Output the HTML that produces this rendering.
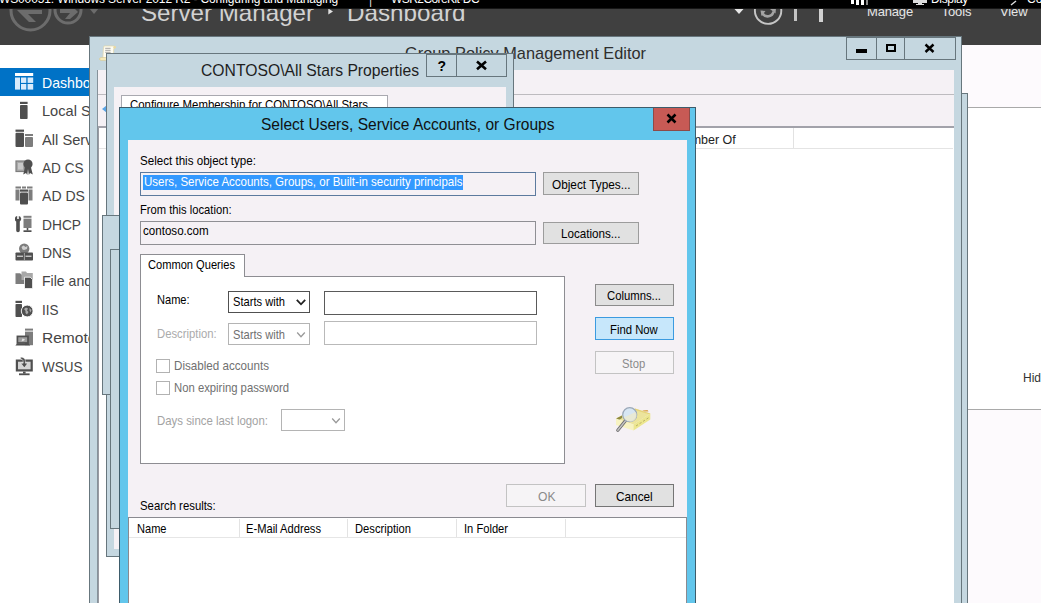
<!DOCTYPE html>
<html lang="en">
<head>
<meta charset="utf-8">
<title>Server Manager - Select Users, Service Accounts, or Groups</title>
<style>
html,body{margin:0;padding:0;}
body{width:1041px;height:603px;overflow:hidden;position:relative;background:#fff;font-family:"Liberation Sans",sans-serif;}
body>div,body>svg,body>span{position:absolute;box-sizing:border-box;}
div>div,div>svg{position:absolute;box-sizing:border-box;}
.t{white-space:nowrap;display:block;}
</style>
</head>
<body>
<div style="left:0px;top:8px;width:1041px;height:37px;background:#404040;"></div>
<svg style="left:0px;top:8px;" width="130" height="36" viewBox="0 0 130 36">
<g fill="none" stroke="#6c6c6c" stroke-width="3">
<circle cx="30.5" cy="2.5" r="19.5"/>
<circle cx="68" cy="2" r="13"/>
</g>
<path d="M18 2 L30 2 L42 2 L42 6 L28 6 L36 14 L29 14 L17 2 Z" fill="#6c6c6c"/>
<path d="M60 0 L74 0 L78 4 L70 11 L65 11 L70 5 L60 5 Z" fill="#6c6c6c"/>
<path d="M89 0 L99 0 L94 6 Z" fill="#6c6c6c"/>
</svg>
<span id="t2" class="t" style="top:-2px;font-size:24px;line-height:29px;color:#d2d2d2;left:140.50px;transform:scaleX(1.0054);transform-origin:0 0;">Server Manager</span>
<svg style="left:328px;top:8px;" width="6" height="7" viewBox="0 0 6 7"><path d="M0.3 0.5 L5 3.5 L0.3 6.5 Z" fill="#e0e0e0"/></svg>
<span id="t4" class="t" style="top:-2px;font-size:24px;line-height:29px;color:#d2d2d2;left:346.50px;transform:scaleX(1.0092);transform-origin:0 0;">Dashboard</span>
<svg style="left:734px;top:9px;" width="10" height="6" viewBox="0 0 10 6"><path d="M0.5 0 L9.5 0 L5 5 Z" fill="#e8e8e8"/></svg>
<svg style="left:750px;top:8px;" width="36" height="24" viewBox="0 0 36 24"><circle cx="18.1" cy="2.7" r="13.2" fill="none" stroke="#c6c6c6" stroke-width="1.9"/>
<path d="M12.5 5.5 A6 6 0 0 0 23.5 3.5" fill="none" stroke="#a4a4a4" stroke-width="2.6"/>
<path d="M10.5 2.5 L15.5 3 L11.5 8 Z M20 1 L26 0 L25.5 5.5 Z" fill="#a4a4a4"/></svg>
<div style="left:794px;top:8px;width:2.5px;height:12.5px;background:#c4c4c4;"></div>
<div style="left:819.3px;top:8px;width:3.4px;height:13.7px;background:#d2d2d2;"></div>
<span id="t9" class="t" style="top:4px;font-size:13px;line-height:16px;color:#e6e6e6;letter-spacing:-0.164px;left:867.00px;">Manage</span>
<span id="t10" class="t" style="top:4px;font-size:13px;line-height:16px;color:#e6e6e6;letter-spacing:-0.072px;left:941.50px;">Tools</span>
<span id="t11" class="t" style="top:4px;font-size:13px;line-height:16px;color:#e6e6e6;letter-spacing:-0.113px;left:1000.00px;">View</span>
<div style="left:0px;top:0px;width:1041px;height:8px;background:#000;"></div>
<span id="t13" class="t" style="top:-8px;font-size:12px;line-height:14px;color:#fff;letter-spacing:-0.136px;left:-1.00px;">WS00051: Windows Server 2012 R2 - Configuring and Managing</span>
<span id="t14" class="t" style="top:-7px;font-size:12px;line-height:14px;color:#ddd;left:369.00px;">|</span>
<span id="t15" class="t" style="top:-8px;font-size:12px;line-height:14px;color:#fff;letter-spacing:-0.573px;left:391.00px;">WSR2CoreKit-DC</span>
<span id="t16" class="t" style="top:-8px;font-size:12px;line-height:14px;color:#fff;letter-spacing:-0.337px;left:931.00px;">Display</span>
<span id="t17" class="t" style="top:-8px;font-size:12px;line-height:14px;color:#fff;left:1027.00px;">Co</span>
<div style="left:851px;top:0px;width:3px;height:4px;background:#fff;"></div>
<div style="left:856px;top:0px;width:3px;height:5px;background:#fff;"></div>
<div style="left:861px;top:0px;width:3px;height:5px;background:#fff;"></div>
<div style="left:866px;top:0px;width:2px;height:5px;background:#888;"></div>
<div style="left:913px;top:0px;width:14px;height:3px;background:#ddd;"></div>
<div style="left:918px;top:3px;width:4px;height:1px;background:#ddd;"></div>
<div style="left:916px;top:4px;width:8px;height:1px;background:#ddd;"></div>
<svg style="left:1010px;top:0px;" width="8" height="6" viewBox="0 0 8 6"><path d="M1 5 L6 1" stroke="#ddd" stroke-width="1.5" fill="none"/></svg>
<div style="left:0px;top:8px;width:1041px;height:1px;background:#161616;"></div>
<div style="left:89px;top:45px;width:952px;height:62px;background:#fdfafd;"></div>
<div style="left:89px;top:107px;width:952px;height:1px;background:#a9a9a9;"></div>
<div style="left:89px;top:409px;width:952px;height:1px;background:#a9a9a9;"></div>
<div style="left:89px;top:410px;width:952px;height:193px;background:#fdfafd;"></div>
<span id="t31" class="t" style="top:371px;font-size:12px;line-height:14px;color:#333;left:1023.00px;">Hide</span>
<div style="left:0px;top:68px;width:89px;height:27.5px;background:#0072c6;"></div>
<span id="t33" class="t" style="top:74px;font-size:14.6px;line-height:18px;color:#fff;left:42.00px;transform:scaleX(0.9663);transform-origin:0 0;">Dashboard</span>
<span id="t34" class="t" style="top:102px;font-size:14.6px;line-height:18px;color:#454545;left:42.00px;transform:scaleX(1.0008);transform-origin:0 0;">Local Server</span>
<span id="t35" class="t" style="top:131px;font-size:14.6px;line-height:18px;color:#454545;left:42.00px;transform:scaleX(1.0062);transform-origin:0 0;">All Servers</span>
<span id="t36" class="t" style="top:159px;font-size:14.6px;line-height:18px;color:#454545;left:42.00px;transform:scaleX(0.9303);transform-origin:0 0;">AD CS</span>
<span id="t37" class="t" style="top:187px;font-size:14.6px;line-height:18px;color:#454545;left:42.00px;transform:scaleX(0.9639);transform-origin:0 0;">AD DS</span>
<span id="t38" class="t" style="top:216px;font-size:14.6px;line-height:18px;color:#454545;left:42.00px;transform:scaleX(0.9430);transform-origin:0 0;">DHCP</span>
<span id="t39" class="t" style="top:244px;font-size:14.6px;line-height:18px;color:#454545;left:42.00px;transform:scaleX(0.9509);transform-origin:0 0;">DNS</span>
<span id="t40" class="t" style="top:272px;font-size:14.6px;line-height:18px;color:#454545;left:42.00px;transform:scaleX(0.9634);transform-origin:0 0;">File and Storage Services</span>
<span id="t41" class="t" style="top:301px;font-size:14.6px;line-height:18px;color:#454545;left:42.00px;transform:scaleX(0.9247);transform-origin:0 0;">IIS</span>
<span id="t42" class="t" style="top:329px;font-size:14.6px;line-height:18px;color:#454545;left:42.00px;transform:scaleX(1.0652);transform-origin:0 0;">Remote Access</span>
<span id="t43" class="t" style="top:358px;font-size:14.6px;line-height:18px;color:#454545;left:42.00px;transform:scaleX(0.9251);transform-origin:0 0;">WSUS</span>
<svg style="left:15px;top:73px;" width="19" height="18" viewBox="0 0 19 18"><rect x="0" y="0" width="18.2" height="3" fill="#fff"/>
<g fill="#d8ebfc"><rect x="0" y="4.5" width="5" height="12.1"/><rect x="6" y="4.5" width="5.3" height="5.4"/><rect x="12.6" y="4.5" width="5.6" height="5.4"/>
<rect x="6" y="11" width="5.3" height="5.6"/><rect x="12.6" y="11" width="5.6" height="5.6"/></g></svg>
<svg style="left:15px;top:101px;" width="19" height="18" viewBox="0 0 19 18"><rect x="5" y="0.8" width="7.6" height="2.2" fill="#4f4f4f"/><rect x="5" y="4" width="7.6" height="14" rx="0.8" fill="#4f4f4f"/></svg>
<svg style="left:15px;top:129px;" width="19" height="19" viewBox="0 0 19 19"><rect x="0.5" y="0.6" width="8.5" height="2.2" fill="#4f4f4f"/><rect x="0.5" y="3.8" width="8.5" height="14.2" rx="1" fill="#4f4f4f"/><rect x="10" y="5" width="8" height="2" fill="#7d7d7d"/><rect x="10" y="8" width="8" height="10" rx="1" fill="#7d7d7d"/></svg>
<svg style="left:15px;top:158px;" width="19" height="19" viewBox="0 0 19 19"><rect x="1" y="3" width="9" height="10.5" fill="#a8a8a8" stroke="#7d7d7d" stroke-width="1.2"/><rect x="3" y="5" width="5" height="6.5" fill="#c9c9c9"/><circle cx="13" cy="6" r="4.6" fill="#4f4f4f"/><path d="M10 9.5 L8.2 16.5 L11 15 L12.3 17 L13 11 L13.8 17 L15 15 L17.8 16.5 L16 9.5 Z" fill="#4f4f4f"/></svg>
<svg style="left:15px;top:186px;" width="19" height="20" viewBox="0 0 19 20"><rect x="0.5" y="0.5" width="5.5" height="2" fill="#7d7d7d"/><rect x="0.5" y="3.5" width="4" height="11" fill="#7d7d7d"/><rect x="12" y="0.5" width="5.5" height="2" fill="#7d7d7d"/><rect x="13.5" y="3.5" width="4" height="11" fill="#7d7d7d"/><rect x="7" y="0.5" width="4" height="2" fill="#7d7d7d"/><rect x="5" y="3.5" width="8" height="2.2" fill="#4f4f4f"/><rect x="5" y="6.6" width="8" height="12" rx="1" fill="#4f4f4f"/></svg>
<svg style="left:15px;top:215px;" width="19" height="19" viewBox="0 0 19 19"><path d="M2.2 1 L2.2 4 L3.8 4 L3.8 1 A3 3 0 0 1 4.8 6.5 L4.8 15.5 A1.8 1.8 0 0 1 1.2 15.5 L1.2 6.5 A3 3 0 0 1 2.2 1 Z" fill="#4f4f4f"/><rect x="8.5" y="0.8" width="8" height="2" fill="#7d7d7d"/><rect x="8.5" y="3.6" width="8" height="9.4" fill="#7d7d7d"/><rect x="11.7" y="13" width="1.6" height="2.5" fill="#4f4f4f"/><rect x="8.5" y="15.3" width="8" height="1.7" fill="#4f4f4f"/></svg>
<svg style="left:15px;top:243px;" width="19" height="19" viewBox="0 0 19 19"><circle cx="9.2" cy="5.8" r="5.2" fill="#7d7d7d"/><path d="M6.5 4 L8.5 2.5 L10.5 4 L12.5 3 L12 6 L9 7 L7.5 6.5 Z" fill="#cfcfcf"/><rect x="0.5" y="9.5" width="17.5" height="8" rx="0.8" fill="#4f4f4f"/><rect x="2" y="12.6" width="6" height="1.3" fill="#d0d0d0"/><rect x="10.5" y="12.6" width="6" height="1.3" fill="#d0d0d0"/><rect x="8.9" y="10" width="0.8" height="7" fill="#bbb"/></svg>
<svg style="left:15px;top:271px;" width="19" height="19" viewBox="0 0 19 19"><path d="M0.5 2.2 L5.2 2.2 L6.2 3.6 L12.5 3.6 L12.5 13 L0.5 13 Z" fill="#7d7d7d"/><path d="M6.5 0.6 L11 0.6 L12 2 L17.8 2 L17.8 9 L6.5 9 Z" fill="#a8a8a8"/><path d="M9.5 6.2 L15.2 6.2 L17.6 8.6 L17.6 17.6 L9.5 17.6 Z" fill="#4f4f4f" stroke="#fff" stroke-width="0.8"/></svg>
<svg style="left:15px;top:300px;" width="19" height="19" viewBox="0 0 19 19"><rect x="0.5" y="0.8" width="6.5" height="2.2" fill="#4f4f4f"/><rect x="0.5" y="4" width="6.5" height="13" rx="0.8" fill="#4f4f4f"/><circle cx="12.2" cy="11" r="5.9" fill="#4f4f4f" stroke="#fff" stroke-width="0.9"/><path d="M9 9 L11 7.5 L13 8.5 L12 10.5 L13.5 12 L12 14.5 L10.5 13 L10.5 11 Z M14.5 8 L16.5 10 L15.5 12.5 L14.5 10.5 Z" fill="#a9a9a9"/></svg>
<svg style="left:15px;top:328px;" width="19" height="19" viewBox="0 0 19 19"><rect x="10" y="0.6" width="8" height="2" fill="#7d7d7d"/><rect x="10" y="3.6" width="8" height="13.6" fill="#7d7d7d"/><rect x="2.4" y="8.4" width="10.6" height="6.6" fill="#9c9c9c" stroke="#4f4f4f" stroke-width="1.7"/><path d="M0.4 17.4 L2 15.4 L13.6 15.4 L15.2 17.4 Z" fill="#4f4f4f"/><path d="M6.5 13.4 L7.4 10.4 L9.8 11.2 L9.2 12.4 Z" fill="#e0e0e0"/></svg>
<svg style="left:15px;top:356px;" width="19" height="20" viewBox="0 0 19 20"><rect x="1.9" y="4.6" width="14.8" height="9.8" fill="#d4d4d4" stroke="#4f4f4f" stroke-width="2.2"/><rect x="8" y="15.6" width="2.6" height="2" fill="#4f4f4f"/><rect x="4" y="17.4" width="10.6" height="1.8" fill="#4f4f4f"/><path d="M5.5 1.2 C9.5 1 10.8 3.5 10.4 7.2 L12.8 7.2 L9.3 11.8 L5.8 7.2 L8.2 7.2 C8.4 4.6 7.8 3.2 5.5 2.8 Z" fill="#4f4f4f" stroke="#fff" stroke-width="0.5"/></svg>
<div style="left:900px;top:93px;width:68px;height:520px;background:#c5d7e0;border:1px solid #67767d;"></div>
<div style="left:89px;top:36px;width:873px;height:581px;background:#c5d7e0;border:1px solid #67767d;"></div>
<div style="left:97px;top:70px;width:857px;height:540px;background:#fff;border-left:1px solid #86929a;"></div>
<div style="left:98px;top:70px;width:856px;height:24px;background:#f5f1f5;"></div>
<div style="left:98px;top:94px;width:856px;height:1px;background:#bdbbbf;"></div>
<div style="left:98px;top:95px;width:856px;height:31px;background:#f5f1f5;"></div>
<div style="left:98px;top:126px;width:856px;height:2px;background:#a2a2aa;"></div>
<div style="left:98px;top:128px;width:1px;height:480px;background:#9a9aa2;"></div>
<svg style="left:101px;top:105px;" width="6" height="8" viewBox="0 0 6 8"><path d="M5.5 0.5 L1 4 L5.5 7.5 Z" fill="#5aa5e6"/></svg>
<span id="t64" class="t" style="top:44px;font-size:17px;line-height:20px;color:#2e2e2e;left:404.50px;transform:scaleX(0.9624);transform-origin:0 0;">Group Policy Management Editor</span>
<svg style="left:99px;top:45px;" width="18" height="17" viewBox="0 0 18 17"><path d="M5 1 L15.4 1 L14.6 5 L14.6 12.9 L3.9 12.9 L4.3 5 Z" fill="#fffdf3" stroke="#e3d6a8" stroke-width="0.7"/>
<circle cx="15.7" cy="2.2" r="1.3" fill="#ead9a0"/>
<rect x="0.6" y="12.7" width="7.6" height="2.6" rx="1.3" fill="#fbf0c2" stroke="#dac98e" stroke-width="0.7"/>
<path d="M6.2 3.3 H11.6 M6.2 5.3 H11.6 M6.2 7.3 H11.6" stroke="#8e8e8e" stroke-width="0.8"/></svg>
<div style="left:846px;top:37px;width:110px;height:23px;border:1px solid #67767d;"></div>
<div style="left:876px;top:38px;width:1px;height:21px;background:#67767d;"></div>
<div style="left:904px;top:38px;width:1px;height:21px;background:#67767d;"></div>
<div style="left:855.5px;top:49px;width:11px;height:3.5px;background:#000;"></div>
<div style="left:886px;top:44px;width:10px;height:8px;border:2px solid #000;"></div>
<svg style="left:924px;top:43px;" width="12" height="11" viewBox="0 0 12 11"><path d="M1.5 1.5 L9.5 9 M9.5 1.5 L1.5 9" stroke="#000" stroke-width="2.4"/></svg>
<div style="left:99px;top:128px;width:854px;height:21px;background:#fff;border-bottom:1px solid #e4e4e4;"></div>
<div style="left:793px;top:128px;width:1px;height:20px;background:#e2e2e2;"></div>
<span id="t74" class="t" style="top:133px;font-size:12.5px;line-height:15px;color:#222;right:305.20px;">Member Of</span>
<div style="left:106px;top:53px;width:408px;height:504px;background:#c5d7e0;border:1px solid #67767d;"></div>
<div style="left:114px;top:87px;width:392px;height:462px;background:#f5f1f5;"></div>
<div style="left:121px;top:95px;width:267px;height:40px;background:#fff;border:1px solid #a9a9b0;"></div>
<span id="t78" class="t" style="top:98px;font-size:12.6px;line-height:15px;color:#000;left:130.00px;transform:scaleX(0.9052);transform-origin:0 0;">Configure Membership for CONTOSO\All Stars</span>
<span id="t79" class="t" style="top:61px;font-size:17px;line-height:20px;color:#1e1e1e;left:201.00px;transform:scaleX(0.9243);transform-origin:0 0;">CONTOSO\All Stars Properties</span>
<div style="left:426px;top:54px;width:81px;height:23px;border:1px solid #67767d;"></div>
<div style="left:456px;top:55px;width:1px;height:21px;background:#67767d;"></div>
<span id="t82" class="t" style="top:58px;font-size:14px;line-height:17px;color:#000;font-weight:700;left:437.50px;">?</span>
<svg style="left:476px;top:60px;" width="12" height="11" viewBox="0 0 12 11"><path d="M1 1.5 L10 9.2 M10 1.5 L1 9.2" stroke="#000" stroke-width="2.6"/></svg>
<div style="left:102px;top:215px;width:300px;height:180px;background:#c5d7e0;border:1px solid #67767d;"></div>
<div style="left:110px;top:249px;width:300px;height:280px;background:#c5d7e0;border:1px solid #67767d;"></div>
<div style="left:119px;top:107px;width:577px;height:520px;background:#62c6ec;border:1px solid #3d5c6b;"></div>
<div style="left:128px;top:140px;width:559px;height:480px;background:#f5f1f5;"></div>
<span id="t88" class="t" style="top:115px;font-size:17px;line-height:20px;color:#111;left:261.00px;transform:scaleX(0.9136);transform-origin:0 0;">Select Users, Service Accounts, or Groups</span>
<div style="left:653px;top:108px;width:37px;height:23px;background:#c75a55;border:1px solid #8d4a48;border-top:none;"></div>
<svg style="left:666px;top:113px;" width="12" height="11" viewBox="0 0 12 11"><path d="M1.5 1.5 L9.5 9.5 M9.5 1.5 L1.5 9.5" stroke="#000" stroke-width="2.5"/></svg>
<span id="t91" class="t" style="top:154px;font-size:12.6px;line-height:15px;color:#000;left:140.40px;transform:scaleX(0.9205);transform-origin:0 0;">Select this object type:</span>
<div style="left:140px;top:171.5px;width:396px;height:24.5px;background:#f5f1f5;border:1px solid #5c7a9e;"></div>
<div style="left:142.5px;top:174.5px;width:320px;height:15px;background:#3399ff;"></div>
<span id="t94" class="t" style="top:175px;font-size:12.6px;line-height:15px;color:#fff;left:143.50px;transform:scaleX(0.9138);transform-origin:0 0;">Users, Service Accounts, Groups, or Built-in security principals</span>
<div style="left:543px;top:172px;width:96px;height:23px;background:#e1e1e1;border:1px solid #9c9c9c;"></div>
<span id="t96" class="t" style="top:178px;font-size:12.6px;line-height:15px;color:#000;left:552.00px;transform:scaleX(0.9371);transform-origin:0 0;">Object Types...</span>
<span id="t97" class="t" style="top:203px;font-size:12.6px;line-height:15px;color:#000;left:140.40px;transform:scaleX(0.8893);transform-origin:0 0;">From this location:</span>
<div style="left:140px;top:220.5px;width:396px;height:24.5px;background:#f5f1f5;border:1px solid #8f8f94;"></div>
<span id="t99" class="t" style="top:224px;font-size:12.6px;line-height:15px;color:#000;left:143.20px;transform:scaleX(0.9201);transform-origin:0 0;">contoso.com</span>
<div style="left:543px;top:222px;width:96px;height:22px;background:#e1e1e1;border:1px solid #9c9c9c;"></div>
<span id="t101" class="t" style="top:227px;font-size:12.6px;line-height:15px;color:#000;left:561.00px;transform:scaleX(0.9236);transform-origin:0 0;">Locations...</span>
<div style="left:140px;top:276px;width:425px;height:188px;background:#fff;border:1px solid #8d8d92;"></div>
<div style="left:140px;top:254px;width:104.5px;height:23px;background:#fff;border:1px solid #8d8d92;border-bottom:none;"></div>
<span id="t104" class="t" style="top:258px;font-size:12.6px;line-height:15px;color:#000;left:148.00px;transform:scaleX(0.8816);transform-origin:0 0;">Common Queries</span>
<span id="t105" class="t" style="top:293px;font-size:12.6px;line-height:15px;color:#000;left:156.80px;transform:scaleX(0.8789);transform-origin:0 0;">Name:</span>
<div style="left:228px;top:291px;width:82px;height:21.5px;background:#fff;border:1px solid #505050;"></div>
<span id="t107" class="t" style="top:295px;font-size:12.6px;line-height:15px;color:#000;left:233.00px;transform:scaleX(0.8844);transform-origin:0 0;">Starts with</span>
<svg style="left:296px;top:298px;" width="10" height="8" viewBox="0 0 10 8"><path d="M0.8 1.8 L5 6.3 L9.2 1.8" fill="none" stroke="#222" stroke-width="1.8"/></svg>
<div style="left:324px;top:291px;width:213px;height:23.5px;background:#fff;border:1px solid #5a5a5a;"></div>
<span id="t110" class="t" style="top:327px;font-size:12.6px;line-height:15px;color:#ababab;left:156.80px;transform:scaleX(0.8962);transform-origin:0 0;">Description:</span>
<div style="left:228px;top:323px;width:82px;height:22.4px;background:#fff;border:1px solid #b4b4b4;"></div>
<span id="t112" class="t" style="top:328px;font-size:12.6px;line-height:15px;color:#6f6f6f;left:233.00px;transform:scaleX(0.8844);transform-origin:0 0;">Starts with</span>
<svg style="left:296px;top:330.5px;" width="10" height="8" viewBox="0 0 10 8"><path d="M1.2 1.5 L5 5.8 L8.8 1.5" fill="none" stroke="#9a9a9a" stroke-width="1.3"/></svg>
<div style="left:324px;top:321px;width:213px;height:24px;background:#fff;border:1px solid #b9b9b9;"></div>
<div style="left:156px;top:359px;width:14px;height:14px;background:#fff;border:1px solid #b2b2b2;"></div>
<span id="t116" class="t" style="top:359px;font-size:12.6px;line-height:15px;color:#707070;left:174.00px;transform:scaleX(0.9230);transform-origin:0 0;">Disabled accounts</span>
<div style="left:156px;top:381px;width:14px;height:13.5px;background:#fff;border:1px solid #b2b2b2;"></div>
<span id="t118" class="t" style="top:381px;font-size:12.6px;line-height:15px;color:#707070;left:174.00px;transform:scaleX(0.8977);transform-origin:0 0;">Non expiring password</span>
<span id="t119" class="t" style="top:414px;font-size:12.6px;line-height:15px;color:#a3a3a3;left:156.80px;transform:scaleX(0.9060);transform-origin:0 0;">Days since last logon:</span>
<div style="left:280.5px;top:409px;width:64.5px;height:22.4px;background:#fff;border:1px solid #b4b4b4;"></div>
<svg style="left:331px;top:417px;" width="10" height="8" viewBox="0 0 10 8"><path d="M1.2 1.5 L5 5.8 L8.8 1.5" fill="none" stroke="#9a9a9a" stroke-width="1.3"/></svg>
<div style="left:594.5px;top:284px;width:79.5px;height:22.3px;background:#e1e1e1;border:1px solid #8c8c8c;"></div>
<span id="t123" class="t" style="top:289px;font-size:12.6px;line-height:15px;color:#000;left:607.00px;transform:scaleX(0.8970);transform-origin:0 0;">Columns...</span>
<div style="left:594.5px;top:317px;width:79.5px;height:23px;background:#c7e7fb;border:1px solid #3b9be0;"></div>
<span id="t125" class="t" style="top:323px;font-size:12.6px;line-height:15px;color:#000;left:610.40px;transform:scaleX(0.8984);transform-origin:0 0;">Find Now</span>
<div style="left:594.5px;top:351px;width:79.5px;height:23px;background:#f6f4f6;border:1px solid #c3c3c3;"></div>
<span id="t127" class="t" style="top:357px;font-size:12.6px;line-height:15px;color:#8a8a8a;left:622.00px;transform:scaleX(0.8950);transform-origin:0 0;">Stop</span>
<svg style="left:605px;top:398px;" width="60" height="42" viewBox="0 0 60 42"><path d="M11 20.5 L30 10.5 L45.3 15.5 L28.5 26.5 Z" fill="#ece49c"/>
<path d="M11 20.5 L17 17.4 L17 20 L14 22 Z" fill="#8f8a40"/>
<path d="M30 10.5 L45.3 15.5 L44 16.3 L30 12 Z" fill="#e6d37a"/>
<path d="M37 12.4 L42.5 12 L43.5 13.6 L40 13.4 Z" fill="#d9a24a"/>
<path d="M11 20.5 L28.5 26.5 L28.5 32.5 L11 27 Z" fill="#f7f3c2"/>
<path d="M28.5 26.5 L45.3 15.5 L45.3 21.5 L28.5 32.5 Z" fill="#ece68f"/>
<path d="M31 28 L33 26.7 M34.5 25.7 L36.5 24.4 M38 23.4 L40 22.1 M41.5 21.1 L43.5 19.8" stroke="#b5ab62" stroke-width="0.9"/>
<path d="M20.6 22.6 L12.8 32.2" stroke="#6e6e6e" stroke-width="3.2" stroke-linecap="round"/>
<path d="M20.6 22.6 L12.8 32.2" stroke="#c4c4c4" stroke-width="1.5" stroke-linecap="round"/>
<circle cx="24.7" cy="16.7" r="7" fill="#d7e6f3" stroke="#9aa8b8" stroke-width="1.2"/>
<path d="M18.6 19.5 L30.8 14 A6.4 6.4 0 0 1 20.5 21.5 Z" fill="#ebe9cf" fill-opacity="0.85"/></svg>
<div style="left:506px;top:484px;width:80px;height:23px;background:#f6f4f6;border:1px solid #c3c3c3;"></div>
<span id="t130" class="t" style="top:490px;font-size:12.6px;line-height:15px;color:#8a8a8a;left:537.50px;transform:scaleX(0.9614);transform-origin:0 0;">OK</span>
<div style="left:594.5px;top:484px;width:79.5px;height:23px;background:#e1e1e1;border:1px solid #757575;"></div>
<span id="t132" class="t" style="top:490px;font-size:12.6px;line-height:15px;color:#000;left:615.50px;transform:scaleX(0.9361);transform-origin:0 0;">Cancel</span>
<span id="t133" class="t" style="top:499px;font-size:12.6px;line-height:15px;color:#000;left:140.40px;transform:scaleX(0.9012);transform-origin:0 0;">Search results:</span>
<div style="left:128px;top:517px;width:559px;height:100px;background:#fff;border:1px solid #8a8a90;"></div>
<div style="left:129px;top:537px;width:557px;height:1px;background:#e6e6e6;"></div>
<div style="left:239px;top:519px;width:1px;height:18px;background:#e3e3e3;"></div>
<div style="left:347px;top:519px;width:1px;height:18px;background:#e3e3e3;"></div>
<div style="left:456px;top:519px;width:1px;height:18px;background:#e3e3e3;"></div>
<div style="left:565px;top:519px;width:1px;height:18px;background:#e3e3e3;"></div>
<span id="t140" class="t" style="top:522px;font-size:12.6px;line-height:15px;color:#000;left:137.00px;transform:scaleX(0.8781);transform-origin:0 0;">Name</span>
<span id="t141" class="t" style="top:522px;font-size:12.6px;line-height:15px;color:#000;left:246.00px;transform:scaleX(0.8854);transform-origin:0 0;">E-Mail Address</span>
<span id="t142" class="t" style="top:522px;font-size:12.6px;line-height:15px;color:#000;left:355.00px;transform:scaleX(0.8889);transform-origin:0 0;">Description</span>
<span id="t143" class="t" style="top:522px;font-size:12.6px;line-height:15px;color:#000;left:464.00px;transform:scaleX(0.8853);transform-origin:0 0;">In Folder</span>
</body>
</html>
